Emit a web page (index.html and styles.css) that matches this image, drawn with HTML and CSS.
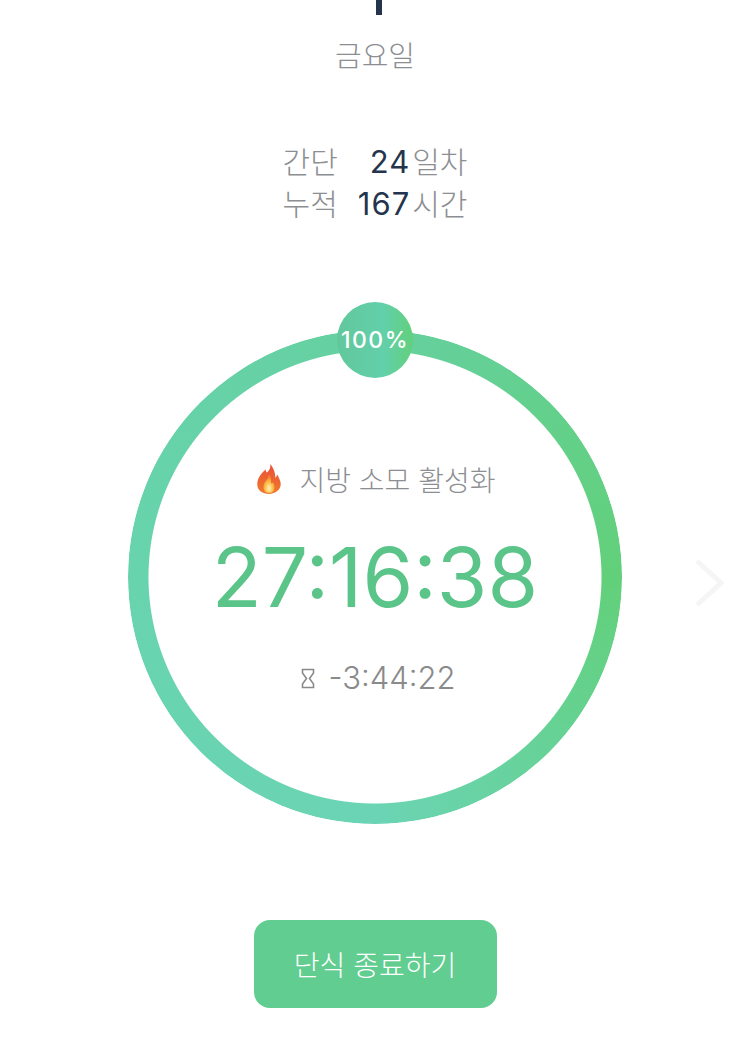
FILE: index.html
```html
<!DOCTYPE html>
<html lang="ko">
<head>
  <meta charset="UTF-8">
  <title>단식 타이머</title>
  <meta name="viewport" content="width=device-width, initial-scale=1">
  <link rel="stylesheet" href="styles.css">
</head>
<body>
  <div class="date-stub"></div>
  <p class="weekday">금요일</p>

  <div class="stats">
    <span class="stat-label">간단</span>
    <span class="stat-value"><b>24</b>일차</span>
    <span class="stat-label">누적</span>
    <span class="stat-value"><b>167</b>시간</span>
  </div>

  <div class="timer-row">
    <div class="ring">
      <div class="ring-track"></div>
      <div class="badge">100%</div>
      <div class="status">
        <svg class="flame" viewBox="0 0 28 30" width="30" height="32">
          <defs>
            <linearGradient id="flameOuter" x1="0" y1="0" x2="0" y2="1">
              <stop offset="0" stop-color="#e8503a"/>
              <stop offset="1" stop-color="#f07a2a"/>
            </linearGradient>
            <radialGradient id="flameInner" cx="0.5" cy="0.75" r="0.6">
              <stop offset="0" stop-color="#fff3c0"/>
              <stop offset="0.55" stop-color="#fdc24a"/>
              <stop offset="1" stop-color="#f78a2c"/>
            </radialGradient>
          </defs>
          <path d="M15 1c1 4-1 6-3 8-1-1-1-2-1-3-4 3-8 8-8 14 0 6 5 9 11 9s11-4 11-9c0-4-2-6-3-9-1 1-1 2-2 3 0-5-2-10-5-13z" fill="url(#flameOuter)"/>
          <path d="M14 11c0 3-2 4-4 7-2 3-2 10 4 10s6-6 4-10c-1 1-1 1-2 1 0-3 0-6-2-8z" fill="url(#flameInner)"/>
        </svg>
        <span>지방 소모 활성화</span>
      </div>
      <div class="clock">27:16:38</div>
      <div class="remain">
        <svg class="hourglass" viewBox="0 0 14 20" width="14" height="21">
          <path d="M1.500 1h11v3.500L8.500 10l4 5.500V19h-11v-3.500l4-5.500-4-5.500z" fill="none" stroke="#8a8a8a" stroke-width="1.600"/>
        </svg>
        <span>-3:44:22</span>
      </div>
    </div>
    <svg class="next" viewBox="0 0 30 50" width="30" height="50">
      <path d="M3 3l24 22L3 47" fill="none" stroke="#f5f5f5" stroke-width="5"/>
    </svg>
  </div>

  <button class="end-btn" type="button">단식 종료하기</button>
</body>
</html>
```

FILE: styles.css
```css
* { box-sizing: border-box; }
html, body { height: 100%; }
body { margin: 0; background: #fff; font-family: Inter, "Noto Sans CJK KR", sans-serif; display: flex; flex-direction: column; align-items: center; overflow: hidden; }

.date-stub { width: 6px; height: 15px; background: #24344d; margin-left: 8px; flex: none; }
.weekday { margin: 19px 0 0; font-size: 29px; line-height: 40px; color: #8c8e91; font-family: "Noto Sans CJK KR", sans-serif; font-weight: 300; }

.stats { display: grid; grid-template-columns: auto auto; grid-auto-rows: 42px; column-gap: 20px; margin-top: 65px; font-size: 30px; line-height: 42px; color: #8c8e91; font-family: "Noto Sans CJK KR", sans-serif; font-weight: 300; }
.stat-value { text-align: right; }
.stat-value b { font-family: Inter, sans-serif; font-size: 31px; line-height: 1; letter-spacing: 1px; font-weight: 400; color: #24344d; margin-right: 2px; }

.timer-row { display: grid; grid-template-columns: 1fr 494px 1fr; align-items: center; width: 100%; margin-top: 107px; }
.ring { grid-column: 2; position: relative; width: 494px; height: 494px; display: flex; flex-direction: column; align-items: center; padding-top: 128px; }
.ring-track { position: absolute; inset: 0; border-radius: 50%; background: conic-gradient(#65d0a0 0deg, #62d07a 90deg, #6bd4b4 180deg, #68d4ae 270deg, #65d0a0 360deg); -webkit-mask: radial-gradient(circle, transparent 226px, #000 227px); mask: radial-gradient(circle, transparent 226px, #000 227px); }
.badge { position: absolute; left: 209px; top: -28px; width: 76px; height: 76px; border-radius: 50%; background: linear-gradient(90deg, #62c79c, #62d0ab 60%, #62d07c); color: #fff; font-size: 23px; font-weight: 500; letter-spacing: 1.5px; display: flex; align-items: center; justify-content: center; }

.status { display: flex; align-items: center; gap: 15px; height: 42px; font-size: 28px; color: #8c8e91; font-family: "Noto Sans CJK KR", sans-serif; font-weight: 300; }
.flame { flex: none; }
.clock { margin-top: 30px; font-size: 82px; line-height: 96px; font-weight: 400; color: #5bc589; }
.remain { display: flex; align-items: center; gap: 13px; margin: 32px 0 0 7px; font-size: 31px; line-height: 40px; font-weight: 300; color: #8a8a8a; }
.next { grid-column: 3; justify-self: end; margin-right: 26px; margin-top: 12px; }

.end-btn { margin-top: 96px; width: 243px; height: 88px; border: none; border-radius: 16px; background: #62cd90; color: #fff; font-size: 28px; font-family: "Noto Sans CJK KR", sans-serif; font-weight: 300; flex: none; }
```
